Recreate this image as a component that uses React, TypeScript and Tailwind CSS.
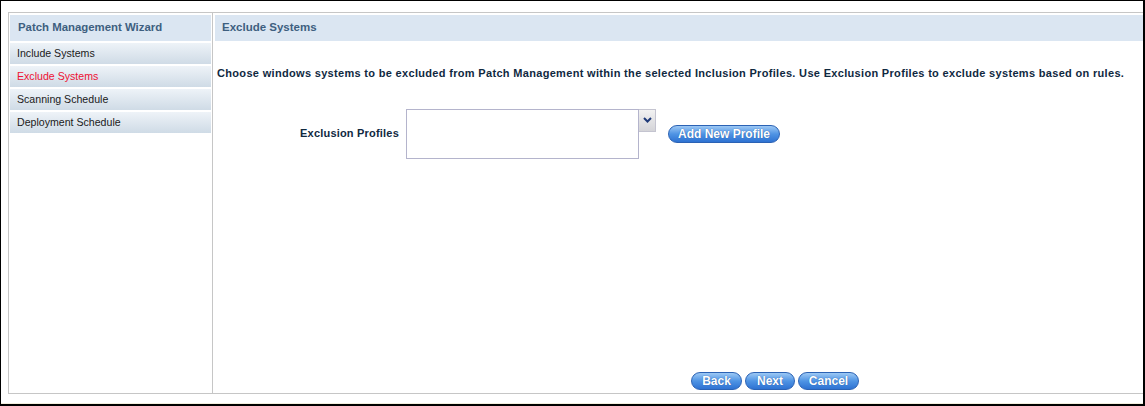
import React from "react";

function Pill({ label, className = "" }: { label: string; className?: string }) {
  return (
    <button
      className={
        "h-[18px] rounded-full border border-[#2b62b4] bg-gradient-to-b from-[#9cc8f4] via-[#4f94e4] to-[#2e72d2] text-white font-bold text-[12px] leading-[16px] [text-shadow:0_0_1px_#1e4f9a] " +
        className
      }
      style={{ fontFamily: '"Liberation Sans", Arial, sans-serif' }}
    >
      {label}
    </button>
  );
}

const items = [
  { label: "Include Systems", active: false },
  { label: "Exclude Systems", active: true },
  { label: "Scanning Schedule", active: false },
  { label: "Deployment Schedule", active: false },
];

export default function App() {
  return (
    <div
      className="w-[1145px] h-[406px] bg-white border-t border-l border-r-2 border-b-2 border-black flex flex-col overflow-hidden"
      style={{ fontFamily: '"Liberation Sans", Arial, sans-serif' }}
    >
      <div className="mt-[11px] ml-[7px] h-[382px] flex border-t border-l border-b border-[#c6c6c6]">
        {/* Left panel */}
        <div className="w-[204px] border-r border-[#c6c6c6] p-[1px] pt-[2px] flex flex-col gap-[2px]">
          <div className="h-[26px] bg-[#dbe6f2] flex items-center pl-[8px] text-[11.4px] font-bold text-[#3e5f80]">
            Patch Management Wizard
          </div>
          {items.map((it) => (
            <div
              key={it.label}
              className={
                "h-[21px] bg-gradient-to-b from-[#eef3f8] to-[#cfdbe6] flex items-center pl-[7px] text-[10.6px] " +
                (it.active ? "text-[#ee1133]" : "text-[#1a1a1a]")
              }
            >
              {it.label}
            </div>
          ))}
        </div>
        {/* Right panel */}
        <div className="flex-1 p-[2px] pr-0 flex flex-col">
          <div className="h-[26px] bg-[#dbe6f2] flex items-center pl-[7px] text-[11.5px] font-bold text-[#3e5f80]">
            Exclude Systems
          </div>
          <div className="mt-[24px] pl-[2px] text-[11px] tracking-[0.32px] font-bold text-[#10293f]">
            Choose windows systems to be excluded from Patch Management within the selected Inclusion Profiles. Use Exclusion Profiles to exclude systems based on rules.
          </div>
          <div className="mt-[27px] flex items-center">
            <div className="w-[184px] text-right text-[11px] tracking-[0.2px] font-bold text-[#10293f]">
              Exclusion Profiles
            </div>
            <div className="ml-[7px] w-[233px] h-[50px] border border-[#b4b4cc] bg-white" />
            <div className="self-start w-[17px] h-[23px] border border-[#c4c4d0] border-l-0 bg-gradient-to-b from-[#f2f2f2] to-[#d4d4d8] flex items-center justify-center">
              <svg width="9" height="6" viewBox="0 0 9 6">
                <path d="M1 1 L4.5 4.5 L8 1" fill="none" stroke="#1e3a78" strokeWidth="2" />
              </svg>
            </div>
            <Pill label="Add New Profile" className="ml-[12px] w-[112px]" />
          </div>
          <div className="mt-auto mb-[1px] ml-[476px] flex gap-[3px]">
            <Pill label="Back" className="w-[51px]" />
            <Pill label="Next" className="w-[50px]" />
            <Pill label="Cancel" className="w-[61px]" />
          </div>
        </div>
      </div>
      <div className="flex-1 border-b border-[#f2eedc]" />
    </div>
  );
}
